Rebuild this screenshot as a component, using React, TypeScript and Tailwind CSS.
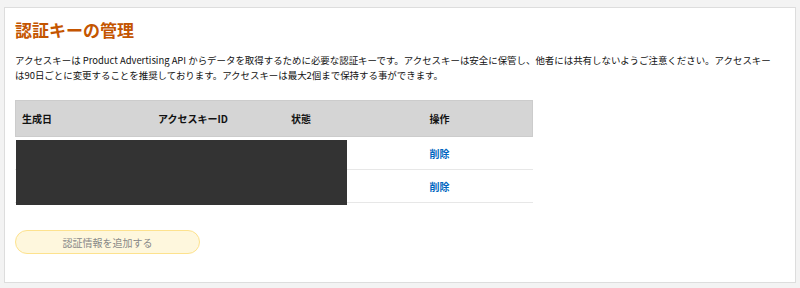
import React from "react";

const font = { fontFamily: '"Noto Sans CJK JP", "Noto Sans", sans-serif' };

const rows = [{ id: 1 }, { id: 2 }];

export default function App() {
  return (
    <div className="h-[288px] w-[800px] bg-[#f3f3f3] pt-[7px] px-[4px]" style={font}>
      <div className="relative h-[276px] border border-[#dddddd] bg-white px-[10px] pt-[10px]">
        <h1 className="text-[17px] font-bold leading-[24px] text-[#c45500]">認証キーの管理</h1>

        <p className="mt-[11px] w-[762px] text-[9.45px] leading-[15px] text-[#111111]">
          アクセスキーは Product Advertising API からデータを取得するために必要な認証キーです。アクセスキーは安全に保管し、他者には共有しないようご注意ください。アクセスキーは90日ごとに変更することを推奨しております。アクセスキーは最大2個まで保持する事ができます。
        </p>

        {/* Key table */}
        <div className="relative mt-[17px] w-[518px]">
          <div className="flex h-[37px] items-center border border-[#cccccc] bg-[#d5d5d5] text-[10px] font-bold text-[#111111]">
            <div className="w-[136px] pl-[6px]">生成日</div>
            <div className="w-[133px] pl-[6px]">アクセスキーID</div>
            <div className="w-[62px] pl-[6px]">状態</div>
            <div className="flex-1 text-center">操作</div>
          </div>
          {rows.map((r) => (
            <div key={r.id} className="flex h-[33px] items-center border-b border-[#e7e7e7] text-[10px]">
              <div className="w-[136px]" />
              <div className="w-[133px]" />
              <div className="w-[62px]" />
              <a className="flex-1 text-center font-bold text-[#0066c0]">削除</a>
            </div>
          ))}
          {/* redacted area */}
          <div className="absolute left-[1px] top-[40px] h-[65px] w-[331px] bg-[#333333]" />
        </div>

        <button className="mt-[27px] h-[24px] w-[185px] rounded-full border border-[#fde28e] bg-[#fef7dd] text-[10px] text-[#888888]">
          認証情報を追加する
        </button>
      </div>
    </div>
  );
}
